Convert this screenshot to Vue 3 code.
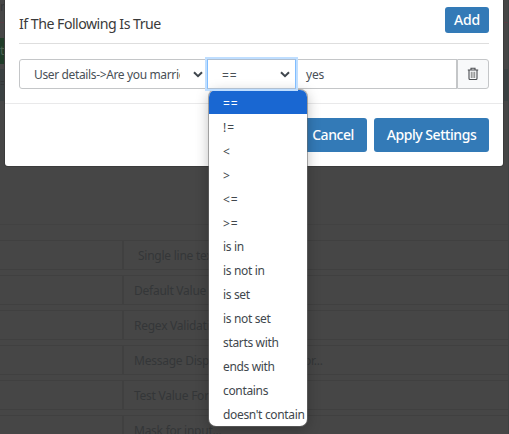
<script setup>
const operators = ['==', '!=', '<', '>', '<=', '>=', 'is in', 'is not in', 'is set', 'is not set', 'starts with', 'ends with', 'contains', "doesn't contain"]
const fields = ['Single line text', 'Default Value', 'Regex Validation', 'Message Displayed when Error or...', 'Test Value For Regex', 'Mask for input...']
</script>

<template>
  <div class="screen">
    <main class="page">
      <div class="page-top">
        <div class="tab-strip">n</div>
        <div class="green-tag">ti</div>
        <div class="teal-band">=</div>
      </div>
      <div class="fields">
        <div v-for="(f, i) in fields" :key="f" class="field" :class="{ first: i === 0 }">
          <div class="field-label"></div>
          <div class="field-value">{{ f }}</div>
        </div>
      </div>
    </main>

    <section class="modal">
      <div class="modal-body">
        <header class="head">
          <h1>If The Following Is True</h1>
          <button class="btn add">Add</button>
        </header>
        <div class="condition">
          <div class="select subject">
            <span class="subject-text">User details-&gt;Are you married</span>
            <svg class="chevron" viewBox="0 0 10 7"><path d="M1 1.2 5 5.2 9 1.2" /></svg>
          </div>
          <div class="select operator">
            <span class="eq">==</span>
            <svg class="chevron" viewBox="0 0 10 7"><path d="M1 1.2 5 5.2 9 1.2" /></svg>
          </div>
          <div class="value">yes</div>
          <button class="trash" aria-label="Remove">
            <svg viewBox="0 0 12 14">
              <path d="M.8 3H11.2M4 2.7V1.2H8V2.7M2 3.5V11.5Q2 12.5 3 12.5H9Q10 12.5 10 11.5V3.5" />
              <path class="ribs" d="M4.3 4.8V11M6 4.8V11M7.7 4.8V11" />
            </svg>
          </button>
        </div>
      </div>
      <footer class="actions">
        <button class="btn cancel">Cancel</button>
        <button class="btn apply">Apply Settings</button>
      </footer>
    </section>

    <ul class="menu">
      <li v-for="(o, i) in operators" :key="o" :class="{ active: i === 0, symbol: i < 6 }">{{ o }}</li>
    </ul>
  </div>
</template>

<style>
body { margin: 0; overflow: hidden; }
</style>

<style scoped>
* { box-sizing: border-box; }
.screen {
  position: relative;
  width: 509px;
  height: 434px;
  overflow: hidden;
  background: #464646;
  font-family: "Noto Sans", "Open Sans", sans-serif;
  font-size: 12px;
  color: #495057;
}
.page { height: 434px; overflow: hidden; color: #343638; border-right: 1px solid #3e4142; }
.page-top { height: 225px; border-bottom: 1px solid #424242; }
.tab-strip { height: 23px; line-height: 13px; border-bottom: 1px solid #573c43; margin-bottom: 15px; }
.green-tag { width: 40px; height: 26px; line-height: 26px; background: #203d29; color: #4d6152; }
.teal-band { height: 32px; margin-top: 5px; line-height: 30px; background: #3b4142; }
.fields { display: flex; flex-direction: column; gap: 5px; padding-top: 15px; }
.field { display: flex; height: 30px; border: 1px solid #404040; border-left: 0; border-right: 0; flex-shrink: 0; }
.field-label { width: 124px; border-right: 2px solid #404040; }
.field-value { padding-left: 10px; line-height: 29px; letter-spacing: -.25px; white-space: nowrap; }
.first .field-value { padding-left: 14px; }

.modal {
  position: absolute;
  left: 5px;
  top: 0;
  width: 498px;
  height: 166px;
  background: #fff;
  border-radius: 0 0 3px 3px;
  box-shadow: 0 0 0 1px #3b3b3b;
}
.modal-body { height: 104px; padding: 7px 14px 0; border-bottom: 1px solid #e9e9ea; }
.head { display: flex; justify-content: space-between; height: 37px; border-bottom: 1px solid #dedede; }
h1 { margin: 0; font-size: 15px; font-weight: 400; line-height: 32px; letter-spacing: -.55px; color: #3a3a3a; white-space: nowrap; transform: scaleX(.945); transform-origin: 0 0; }
.btn { border: 0; padding: 0; border-radius: 3px; background: #337ab7; color: #fff; font: 500 14px "Noto Sans", sans-serif; white-space: nowrap; }
.add { width: 44px; height: 26px; line-height: 26px; letter-spacing: -.2px; }
.condition { display: flex; height: 30px; margin-top: 15px; }
.select { display: flex; align-items: center; justify-content: space-between; border: 1px solid #c4c6c8; }
.subject { width: 189px; border-radius: 3px 0 0 3px; padding: 0 4px 0 14px; }
.subject-text { width: 146px; overflow: hidden; white-space: nowrap; letter-spacing: -.36px; line-height: 22px; padding-top: 1px; }
.chevron { width: 10px; height: 7px; flex: none; fill: none; stroke: #3f464d; stroke-width: 2; }
.operator { width: 89px; margin-left: -1px; padding: 0 5px 0 14px; border-color: #80bdff; border-top-color: #b0bfd0; border-bottom-color: #b0bfd0; box-shadow: 0 0 0 2px #bfdeff; z-index: 1; }
.eq { letter-spacing: 1px; padding-top: 2px; }
.value { flex: 1; border: 1px solid #c4c6c8; border-left: 0; line-height: 30px; padding-left: 10px; letter-spacing: -.2px; }
.trash { width: 32px; display: grid; place-items: center; padding: 0; border: 1px solid #c4c6c8; border-radius: 0 3px 3px 0; background: #f8f9fa; }
.trash svg { width: 12px; height: 14px; fill: none; stroke: #4a4d50; stroke-width: 1.1; }
.trash .ribs { stroke: #777; stroke-width: .9; }
.actions { display: flex; justify-content: flex-end; gap: 7px; padding: 14px 14px 0; }
.actions .btn { height: 34px; line-height: 34px; }
.cancel { width: 68px; letter-spacing: -.45px; }
.apply { width: 115px; letter-spacing: -.45px; }

.menu {
  position: absolute;
  left: 209px;
  top: 90px;
  width: 98px;
  height: 336px;
  margin: 0;
  padding: 0;
  overflow: hidden;
  list-style: none;
  background: #fff;
  border-radius: 7px;
  box-shadow: 0 0 0 1px rgba(110,110,110,.55), 0 3px 14px rgba(0,0,0,.28);
}
.menu li { height: 24px; padding-left: 14px; line-height: 25px; letter-spacing: -.34px; white-space: nowrap; color: #41474d; }
.menu .symbol { letter-spacing: 1px; line-height: 27px; }
.menu .active { background: #1967d2; color: #fff; }
</style>
